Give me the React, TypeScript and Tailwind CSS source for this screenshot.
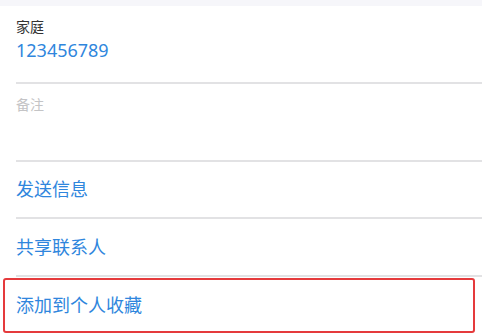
const font = { fontFamily: '"Noto Sans", "Noto Sans CJK SC", sans-serif' }

const Sep = () => <div className="ml-4 h-[2px] bg-[#e2e2e4]" />

export default function App() {
  return (
    <div className="w-[482px] h-[333px] bg-white overflow-hidden" style={font}>
      <div className="h-[6px] bg-[#f6f6fa]" />
      <div className="h-[76px] pl-4 pt-[10px]">
        <div className="text-[14px] leading-[22px] text-[#333]">家庭</div>
        <div className="text-[18px] leading-[24px] text-[#2f86dd]">123456789</div>
      </div>
      <Sep />
      <div className="h-[76px] pl-4 pt-[10px]">
        <div className="text-[14px] leading-[22px] text-[#c4c4c6]">备注</div>
      </div>
      <Sep />
      <div className="h-[55px] pl-4 flex items-center text-[18px] text-[#2f86dd]">发送信息</div>
      <Sep />
      <div className="h-[56px] pl-4 flex items-center text-[18px] text-[#2f86dd]">共享联系人</div>
      <Sep />
      <div className="ml-[3px] mt-px w-[472px] h-[55px] border-2 border-[#e53a3c] rounded-[3px] pl-[11px] flex items-center text-[18px] text-[#2f86dd]">
        添加到个人收藏
      </div>
    </div>
  )
}
